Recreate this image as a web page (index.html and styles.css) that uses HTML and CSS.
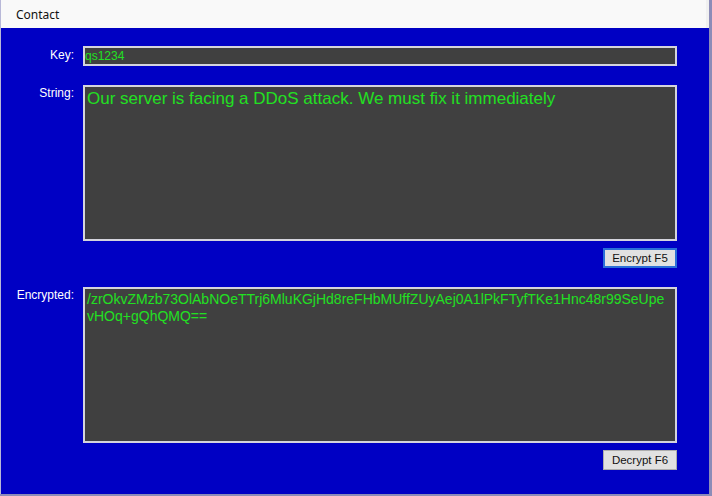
FILE: index.html
```html
<!DOCTYPE html>
<html>
<head>
<meta charset="utf-8">
<title>Contact</title>
<link rel="stylesheet" href="styles.css">
</head>
<body>
<div class="window">
  <div class="titlebar">Contact</div>
  <div class="client">
    <div class="form">
      <label class="lbl lbl-key">Key:</label>
      <div class="field key">qs1234</div>

      <label class="lbl lbl-area">String:</label>
      <div class="field area area-string">Our server is facing a DDoS attack. We must fix it immediately</div>

      <div class="btnrow"><button class="btn focused">Encrypt F5</button></div>

      <label class="lbl lbl-area">Encrypted:</label>
      <div class="field area area-enc">/zrOkvZMzb73OlAbNOeTTrj6MluKGjHd8reFHbMUffZUyAej0A1lPkFTyfTKe1Hnc48r99SeUpe vHOq+gQhQMQ==</div>

      <div class="btnrow"><button class="btn">Decrypt F6</button></div>
    </div>
  </div>
</div>
</body>
</html>
```

FILE: styles.css
```css
html, body {
  margin: 0;
  padding: 0;
  background: #8c8cb8;
  width: 712px;
  height: 496px;
  overflow: hidden;
}

.window {
  width: 709px;
  height: 494px;
  display: flex;
  flex-direction: column;
  border-left: 1px solid #b8b8d8;
  box-sizing: border-box;
}

.titlebar {
  height: 28px;
  background: #f9f9f9;
  font-family: "Noto Sans", "Liberation Sans", sans-serif;
  font-size: 12px;
  color: #111;
  padding-left: 15px;
  line-height: 30px;
  box-sizing: border-box;
  border-right: 3px solid #f0f0f0;
}

.client {
  flex: 1;
  background: #0000c4;
  padding-top: 18px;
}

.form {
  display: grid;
  grid-template-columns: 82px 594px;
  row-gap: 0;
  font-family: "Liberation Sans", Arial, sans-serif;
}

.lbl {
  color: #ffffff;
  font-size: 12px;
  text-align: right;
  padding-right: 9px;
  line-height: 14px;
}

.lbl-key {
  padding-top: 2px;
}

.lbl-area {
  padding-top: 1px;
}

.field {
  background: #404040;
  color: #22e022;
  border: 2px solid #d4d4dc;
  box-sizing: border-box;
  overflow: hidden;
}

.key {
  height: 20px;
  font-size: 12px;
  line-height: 16px;
  padding-left: 0;
  margin-bottom: 19px;
}

.area {
  height: 156px;
  padding: 1px 2px;
}

.area-string {
  font-size: 17px;
  line-height: 21px;
}

.area-enc {
  font-size: 14px;
  line-height: 17px;
  padding-top: 2px;
  word-break: break-all;
}

.btnrow {
  grid-column: 2;
  display: flex;
  justify-content: flex-end;
  padding-top: 7px;
  padding-bottom: 19px;
}

.btn {
  width: 74px;
  height: 20px;
  margin: 0;
  padding: 0;
  background: #e1e1e1;
  border: 1px solid #adadad;
  font-family: "Liberation Sans", Arial, sans-serif;
  font-size: 11.5px;
  color: #111;
  line-height: 16px;
}

.btn.focused {
  border: 2px solid #2a6fd8;
}
```
